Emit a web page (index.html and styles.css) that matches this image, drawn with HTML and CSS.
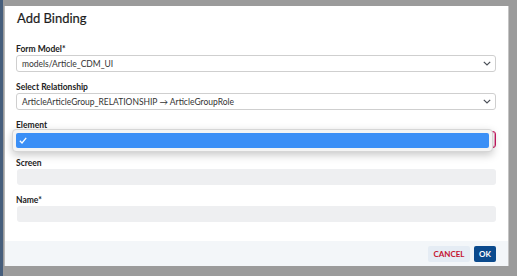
FILE: index.html
```html
<!DOCTYPE html>
<html lang="en">

<head>
    <meta charset="UTF-8">
    <meta name="viewport" content="width=device-width, initial-scale=1.0">
    <title>Add Binding</title>
    <link rel="stylesheet" href="styles.css">
</head>

<body>
    <div class="dialog">
        <div class="dialogHeader">Add Binding</div>

        <div class="dialogBody">
            <div class="field">
                <label class="fieldLabel">Form Model*</label>
                <div class="select">
                    <span>models/Article_CDM_UI</span>
                    <svg class="chevron" width="8" height="5" viewBox="0 0 8 5">
                        <path d="M0.8 0.8 L4 4 L7.2 0.8" fill="none" stroke="#4a4f57" stroke-width="1.2" />
                    </svg>
                </div>
            </div>

            <div class="field">
                <label class="fieldLabel">Select Relationship</label>
                <div class="select">
                    <span>ArticleArticleGroup_RELATIONSHIP → ArticleGroupRole</span>
                    <svg class="chevron" width="8" height="5" viewBox="0 0 8 5">
                        <path d="M0.8 0.8 L4 4 L7.2 0.8" fill="none" stroke="#4a4f57" stroke-width="1.2" />
                    </svg>
                </div>
            </div>

            <div class="field">
                <label class="fieldLabel">Element</label>
                <div class="select selectFocus">
                    <span class="scrollDots">⋮</span>
                    <div class="dropdown">
                        <div class="option">
                            <svg width="8" height="7" viewBox="0 0 8 7">
                                <path d="M0.8 3.8 L3 6 L7.2 0.8" fill="none" stroke="#fff" stroke-width="1.3" />
                            </svg>
                        </div>
                    </div>
                </div>
            </div>

            <div class="field">
                <label class="fieldLabel">Screen</label>
                <div class="input"></div>
            </div>

            <div class="field">
                <label class="fieldLabel">Name*</label>
                <div class="input"></div>
            </div>
        </div>

        <div class="dialogFooter">
            <div class="btnCancel">CANCEL</div>
            <div class="btnOk">OK</div>
        </div>
    </div>
</body>

</html>
```

FILE: styles.css
```css
body {
    margin: 0;
    padding: 6px 0 0 2px;
    height: 276px;
    box-sizing: border-box;
    background-color: #9b9b9b;
    border-left: 3px solid #465e7c;
    font-family: Lato, "Noto Sans", sans-serif;
    color: #222;
    overflow: hidden;
}

.dialog {
    width: 503px;
    background-color: #fff;
    box-shadow: -1px 0 0 #b8b8b8, 1px 0 0 #c4c4c4;
}

.dialogHeader {
    padding: 2px 12px 0 12px;
    font-size: 13px;
    line-height: 20px;
    font-weight: 400;
    color: #1d1d1d;
    -webkit-text-stroke: 0.2px #1d1d1d;
}

.dialogBody {
    padding: 15px 12px 19px 11px;
}

.field {
    margin-bottom: 9px;
}

.field:last-child {
    margin-bottom: 0;
}

.fieldLabel {
    display: block;
    font-size: 8.5px;
    line-height: 12px;
    font-weight: 700;
    color: #222;
}

.select {
    position: relative;
    height: 17px;
    box-sizing: border-box;
    border: 1px solid #cfcfcf;
    border-radius: 3px;
    display: flex;
    align-items: center;
    justify-content: space-between;
    padding: 0 4px 0 5px;
    font-size: 8.5px;
    color: #333;
}

.chevron {
    display: block;
}

.selectFocus {
    margin-left: 1px;
    border-color: #c8175f;
    box-shadow: inset 0 0 0 1px #e9a7c3;
    justify-content: flex-end;
}

.scrollDots {
    font-size: 7px;
    color: #555;
}

.dropdown {
    position: absolute;
    left: -6px;
    top: -3px;
    width: 481px;
    height: 23px;
    box-sizing: border-box;
    padding: 3px;
    background-color: #f4f4f4;
    border: 1px solid #d6d6d6;
    border-radius: 4px;
    box-shadow: 0 3px 8px rgba(0, 0, 0, 0.22);
}

.option {
    height: 15px;
    background-color: #3b8ff6;
    border-radius: 2px;
    display: flex;
    align-items: center;
    padding-left: 3px;
}

.input {
    height: 16px;
    margin-left: 1px;
    background-color: #eeeff1;
    border-radius: 3px;
}

.dialogFooter {
    height: 25px;
    box-sizing: border-box;
    padding: 5px 12px;
    background-color: #f3f6f9;
    display: flex;
    justify-content: flex-end;
    gap: 4px;
}

.btnCancel {
    width: 42px;
    height: 16px;
    line-height: 16px;
    text-align: center;
    font-size: 8px;
    font-weight: 700;
    color: #c4122f;
    background-color: #e5ecf4;
    border-radius: 2px;
}

.btnOk {
    width: 22px;
    height: 16px;
    line-height: 16px;
    text-align: center;
    font-size: 8px;
    font-weight: 700;
    color: #fff;
    background-color: #0b4a8d;
    border-radius: 2px;
}
```
